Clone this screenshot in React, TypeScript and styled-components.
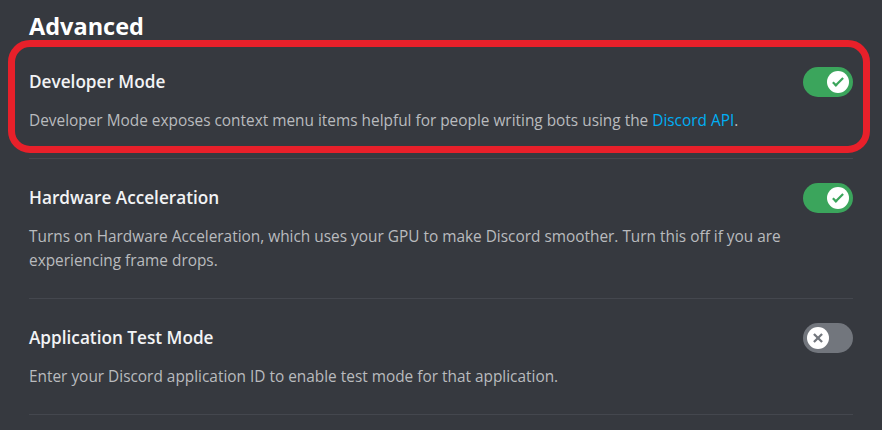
import React from "react";
import styled, { createGlobalStyle } from "styled-components";

const GlobalStyle = createGlobalStyle`
  html, body {
    margin: 0;
    padding: 0;
    background: #36393f;
  }
  body {
    font-family: "Open Sans", "Noto Sans", "Liberation Sans", sans-serif;
    -webkit-font-smoothing: antialiased;
  }
`;

const Page = styled.div`
  width: 882px;
  height: 430px;
  box-sizing: border-box;
  padding: 11px 29px 0;
  background: #36393f;
  overflow: hidden;
`;

const Heading = styled.h2`
  margin: 0 0 26px;
  font-size: 23.5px;
  line-height: 30px;
  font-weight: 700;
  color: #ffffff;
`;

const Section = styled.div`
  position: relative;
`;

const Highlight = styled.div`
  position: absolute;
  top: -27px;
  left: -21px;
  right: -17px;
  bottom: -20px;
  border: 7px solid #e8202a;
  border-radius: 22px;
  pointer-events: none;
`;

const Row = styled.div`
  display: flex;
  flex-direction: column;
`;

const TitleRow = styled.div`
  display: flex;
  align-items: center;
  justify-content: space-between;
  height: 30px;
`;

const Title = styled.div`
  font-size: 17.2px;
  line-height: 30px;
  font-weight: 600;
  color: #f2f3f5;
`;

const Description = styled.div`
  margin-top: 12px;
  font-size: 15.4px;
  line-height: 24px;
  font-weight: 400;
  color: #b9bbbe;
`;

const Link = styled.a`
  color: #00aff4;
  text-decoration: none;
`;

const Divider = styled.div`
  height: 1px;
  background: #44474e;
  margin: 25px 0 24px;
`;

const Track = styled.div<{ $on: boolean }>`
  position: relative;
  flex: none;
  width: 50px;
  height: 30px;
  border-radius: 15px;
  background: ${(p) => (p.$on ? "#3ba55c" : "#72767d")};
`;

const Knob = styled.div<{ $on: boolean }>`
  position: absolute;
  top: 4px;
  left: ${(p) => (p.$on ? "24px" : "4px")};
  width: 22px;
  height: 22px;
  border-radius: 50%;
  background: #ffffff;
  display: flex;
  align-items: center;
  justify-content: center;
  color: ${(p) => (p.$on ? "#3ba55c" : "#72767d")};
`;

function Toggle({ on }: { on: boolean }) {
  return (
    <Track $on={on}>
      <Knob $on={on}>
        <svg width="20" height="20" viewBox="0 0 20 20" fill="currentColor">
          {on ? (
            <>
              <path d="M7.89561 14.8538L6.30462 13.2629L14.3099 5.25755L15.9009 6.84854L7.89561 14.8538Z" />
              <path d="M4.08643 11.0903L5.67742 9.49929L9.4485 13.2704L7.85751 14.8614L4.08643 11.0903Z" />
            </>
          ) : (
            <>
              <path d="M5.13231 6.72963L6.7233 5.13864L14.855 13.2704L13.264 14.8614L5.13231 6.72963Z" />
              <path d="M13.2704 5.13864L14.8614 6.72963L6.72963 14.8614L5.13864 13.2704L13.2704 5.13864Z" />
            </>
          )}
        </svg>
      </Knob>
    </Track>
  );
}

type Setting = {
  title: string;
  on: boolean;
  description: React.ReactNode;
  highlighted?: boolean;
};

const settings: Setting[] = [
  {
    title: "Developer Mode",
    on: true,
    highlighted: true,
    description: (
      <>
        Developer Mode exposes context menu items helpful for people writing bots using the{" "}
        <Link href="#">Discord API</Link>.
      </>
    ),
  },
  {
    title: "Hardware Acceleration",
    on: true,
    description:
      "Turns on Hardware Acceleration, which uses your GPU to make Discord smoother. Turn this off if you are experiencing frame drops.",
  },
  {
    title: "Application Test Mode",
    on: false,
    description: "Enter your Discord application ID to enable test mode for that application.",
  },
];

export default function App() {
  return (
    <>
      <GlobalStyle />
      <Page>
        <Heading>Advanced</Heading>
        {settings.map((s) => (
          <React.Fragment key={s.title}>
            <Section>
              <Row>
                <TitleRow>
                  <Title>{s.title}</Title>
                  <Toggle on={s.on} />
                </TitleRow>
                <Description>{s.description}</Description>
              </Row>
              {s.highlighted && <Highlight />}
            </Section>
            <Divider />
          </React.Fragment>
        ))}
      </Page>
    </>
  );
}
